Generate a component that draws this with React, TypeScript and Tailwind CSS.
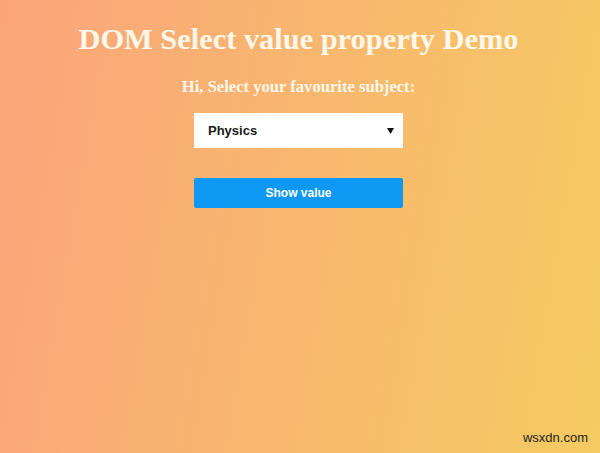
import React from "react";

export default function App() {
  return (
    <div
      className="relative w-[600px] h-[453px] overflow-hidden bg-[linear-gradient(100deg,#fba47b,#f5cb62)]"
    >
      <div className="flex flex-col items-center pt-[22px] pr-[3px]">
        <h1 className="text-[30.4px] leading-[34px] font-bold text-[#fff8ea] [font-family:'Liberation_Serif',serif]">
          DOM Select value property Demo
        </h1>
        <h3 className="mt-[21px] text-[16.6px] leading-[20px] font-bold text-[#fff8ea] [font-family:'Liberation_Serif',serif]">
          Hi, Select your favourite subject:
        </h3>
        <div className="mt-[16px] w-[209px] h-[35px] bg-white flex items-center justify-between pl-[14px] pr-[9px] [font-family:'Liberation_Sans',sans-serif]">
          <span className="text-[13px] font-bold text-[#1a1a1a]">Physics</span>
          <svg width="7" height="6" viewBox="0 0 7 6">
            <polygon points="0,0 7,0 3.5,6" fill="#111" />
          </svg>
        </div>
        <button className="mt-[30px] w-[209px] h-[30px] bg-[#0d98f4] rounded-[2px] text-white text-[12px] font-bold [font-family:'Liberation_Sans',sans-serif]">
          Show value
        </button>
      </div>
      <div className="absolute right-[12px] bottom-[6px] text-[13px] text-[#1f1f1f] [font-family:'Liberation_Sans',sans-serif]">
        wsxdn.com
      </div>
    </div>
  );
}
